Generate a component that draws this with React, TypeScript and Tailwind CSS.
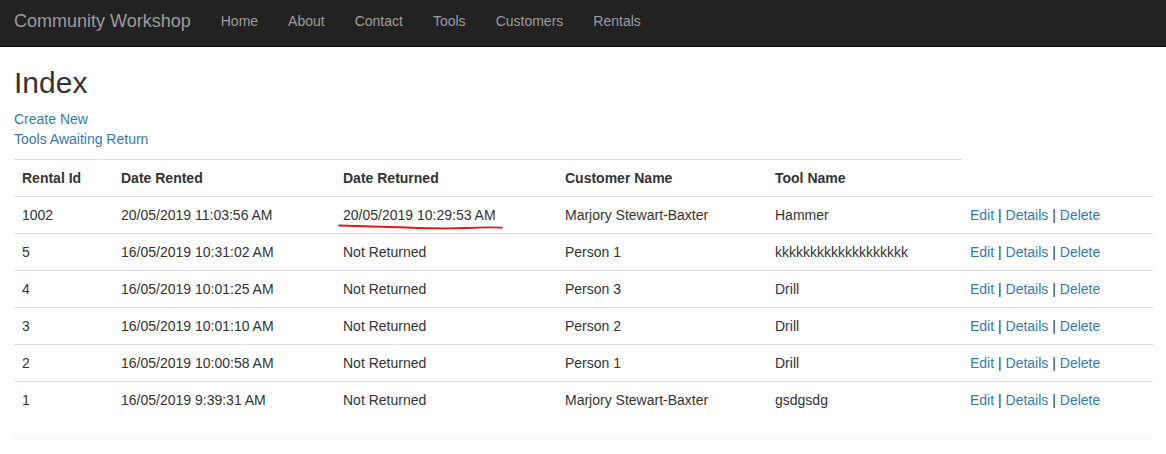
import React from "react";

const rows = [
  { id: "1002", rented: "20/05/2019 11:03:56 AM", returned: "20/05/2019 10:29:53 AM", customer: "Marjory Stewart-Baxter", tool: "Hammer", mark: true },
  { id: "5", rented: "16/05/2019 10:31:02 AM", returned: "Not Returned", customer: "Person 1", tool: "kkkkkkkkkkkkkkkkkkk" },
  { id: "4", rented: "16/05/2019 10:01:25 AM", returned: "Not Returned", customer: "Person 3", tool: "Drill" },
  { id: "3", rented: "16/05/2019 10:01:10 AM", returned: "Not Returned", customer: "Person 2", tool: "Drill" },
  { id: "2", rented: "16/05/2019 10:00:58 AM", returned: "Not Returned", customer: "Person 1", tool: "Drill" },
  { id: "1", rented: "16/05/2019 9:39:31 AM", returned: "Not Returned", customer: "Marjory Stewart-Baxter", tool: "gsdgsdg" },
];

const navItems = ["Home", "About", "Contact", "Tools", "Customers", "Rentals"];

export default function App() {
  return (
    <div className="min-h-[454px] bg-white text-[14px] leading-[20px] text-[#333]" style={{ fontFamily: '"Liberation Sans", Arial, sans-serif' }}>
      <nav className="h-[47px] bg-[#222] border-b border-[#080808] flex items-start pt-[11px] pl-[14px] text-[#9d9d9d]">
        <a className="text-[18px] leading-[20px] pr-[15px]">Community Workshop</a>
        <ul className="flex">
          {navItems.map((n) => (
            <li key={n} className="px-[15px] leading-[20px]">{n}</li>
          ))}
        </ul>
      </nav>
      <div className="px-[14px] w-[1167px]">
        <h2 className="text-[30px] leading-[33px] mt-[19px] mb-[10px] font-normal">Index</h2>
        <p className="mb-[10px]">
          <a className="block text-[#337ab7]">Create New</a>
          <a className="block text-[#337ab7]">Tools Awaiting Return</a>
        </p>
        <table className="w-[1139px] table-fixed border-collapse">
          <colgroup>
            <col className="w-[99px]" />
            <col className="w-[222px]" />
            <col className="w-[222px]" />
            <col className="w-[210px]" />
            <col className="w-[195px]" />
            <col className="w-[191px]" />
          </colgroup>
          <tbody>
            <tr>
              {["Rental Id", "Date Rented", "Date Returned", "Customer Name", "Tool Name"].map((h) => (
                <th key={h} className="text-left font-bold p-[8px] border-t border-[#ddd]">{h}</th>
              ))}
              <th className="p-[8px]"></th>
            </tr>
            {rows.map((r) => (
              <tr key={r.id}>
                <td className="p-[8px] border-t border-[#ddd]">{r.id}</td>
                <td className="p-[8px] border-t border-[#ddd]">{r.rented}</td>
                <td className="p-[8px] border-t border-[#ddd] relative">
                  {r.returned}
                  {r.mark && (
                    <svg className="absolute left-[2px] top-[26px]" width="170" height="8" viewBox="0 0 170 8">
                      <path d="M2 2.5 C 20 3, 40 3.5, 70 4.5 C 95 5.5, 110 5.8, 130 5 C 145 4.2, 155 4.3, 165 4.6" fill="none" stroke="#e8161b" strokeWidth="1.8" strokeLinecap="round" />
                    </svg>
                  )}
                </td>
                <td className="p-[8px] border-t border-[#ddd]">{r.customer}</td>
                <td className="p-[8px] border-t border-[#ddd]">{r.tool}</td>
                <td className="p-[8px] border-t border-[#ddd] whitespace-nowrap">
                  <a className="text-[#337ab7]">Edit</a> | <a className="text-[#337ab7]">Details</a> | <a className="text-[#337ab7]">Delete</a>
                </td>
              </tr>
            ))}
          </tbody>
        </table>
        <hr className="mt-[20px] w-[1139px] border-t border-[#eee]" />
      </div>
    </div>
  );
}
